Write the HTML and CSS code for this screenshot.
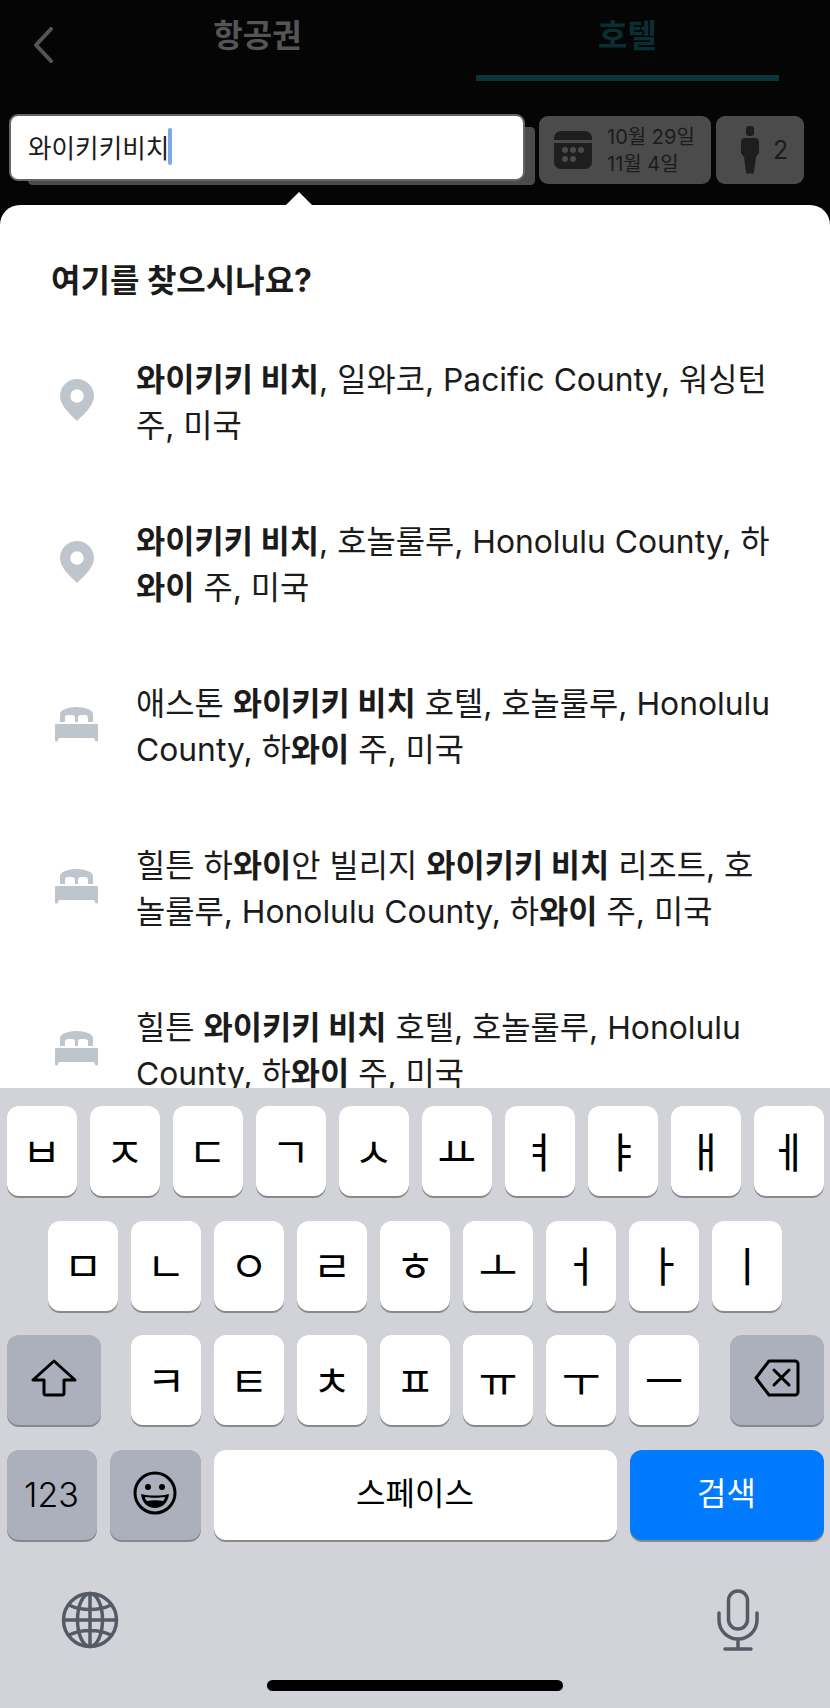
FILE: index.html
```html
<!DOCTYPE html>
<html lang="ko">

<head>
  <meta charset="UTF-8" />
  <meta name="viewport" content="width=device-width, initial-scale=1.0" />
  <title>호텔 검색</title>
  <link rel="stylesheet" href="styles.css">
</head>

<body>
  <div class="screen">
    <!-- Tabs -->
    <div class="tabs">
      <svg class="back" width="20" height="36" viewBox="0 0 20 36"><path d="M18 2 3 18l15 16" fill="none" stroke="#555" stroke-width="4" stroke-linecap="round" stroke-linejoin="round"/></svg>
      <div class="tab">항공권</div>
      <div class="tab active">호텔</div>
    </div>

    <!-- Search bar -->
    <div class="search-row">
      <div class="search-input"><span>와이키키비치</span><i class="caret"></i></div>
      <div class="chip dates">
        <svg width="38" height="38" viewBox="0 0 38 38"><path fill="#1e1e1e" fill-rule="evenodd" d="M7 0h24a7 7 0 0 1 7 7v2H0V7a7 7 0 0 1 7-7ZM0 12h38v19a7 7 0 0 1-7 7H7a7 7 0 0 1-7-7V12Zm11 4a3 3 0 1 0 0 6 3 3 0 0 0 0-6Zm8 0a3 3 0 1 0 0 6 3 3 0 0 0 0-6Zm8 0a3 3 0 1 0 0 6 3 3 0 0 0 0-6Zm-16 9a3 3 0 1 0 0 6 3 3 0 0 0 0-6Zm8 0a3 3 0 1 0 0 6 3 3 0 0 0 0-6Z"/></svg>
        <div class="date-text">10월 29일<br>11월 4일</div>
      </div>
      <div class="chip guests">
        <svg width="18" height="48" viewBox="0 0 18 48"><rect x="5" y="0" width="8" height="10" rx="3" fill="#1e1e1e"/><path fill="#1e1e1e" d="M4 12h10a4 4 0 0 1 4 4v11l-3 4-2 15a2 2 0 0 1-4 0 2 2 0 0 1-0 0H9a2 2 0 0 1-4 0L3 31l-3-4V16a4 4 0 0 1 4-4Z"/></svg>
        <span>2</span>
      </div>
    </div>
    <div class="pointer"></div>

    <!-- Suggestions -->
    <div class="panel">
      <h2>여기를 찾으시나요?</h2>

      <div class="result">
        <svg class="pin" width="34" height="42" viewBox="0 0 34 42"><path fill="#bfc5cc" fill-rule="evenodd" d="M17 0C7.6 0 0 7.6 0 17c0 10 11 19 17 25 6-6 17-15 17-25C34 7.600 26.400 0 17 0Zm0 10.300a6.700 6.700 0 1 1 0 13.400 6.700 6.700 0 0 1 0-13.400Z"/></svg>
        <p><b>와이키키 비치</b>, 일와코, Pacific County, 워싱턴<br>주, 미국</p>
      </div>
      <div class="result">
        <svg class="pin" width="34" height="42" viewBox="0 0 34 42"><path fill="#bfc5cc" fill-rule="evenodd" d="M17 0C7.6 0 0 7.6 0 17c0 10 11 19 17 25 6-6 17-15 17-25C34 7.600 26.400 0 17 0Zm0 10.300a6.700 6.700 0 1 1 0 13.400 6.700 6.700 0 0 1 0-13.400Z"/></svg>
        <p><b>와이키키 비치</b>, 호놀룰루, Honolulu County, 하<br><b>와이</b> 주, 미국</p>
      </div>
      <div class="result">
        <svg class="bed" width="43" height="35" viewBox="0 0 43 35"><path fill="#bfc5cc" d="M5 7c0-4 8-7 16.500-7S38 3 38 7v8h-5V11a3 3 0 0 0-3-3h-4a3 3 0 0 0-3 3v4h-3v-4a3 3 0 0 0-3-3h-4a3 3 0 0 0-3 3v4H5V7ZM1 17h41a1 1 0 0 1 1 1v15a1.500 1.500 0 0 1-3 0l-1-2H4l-1 2a1.500 1.500 0 0 1-3 0V18a1 1 0 0 1 1-1Z"/></svg>
        <p>애스톤 <b>와이키키 비치</b> 호텔, 호놀룰루, Honolulu<br>County, 하<b>와이</b> 주, 미국</p>
      </div>
      <div class="result">
        <svg class="bed" width="43" height="35" viewBox="0 0 43 35"><path fill="#bfc5cc" d="M5 7c0-4 8-7 16.500-7S38 3 38 7v8h-5V11a3 3 0 0 0-3-3h-4a3 3 0 0 0-3 3v4h-3v-4a3 3 0 0 0-3-3h-4a3 3 0 0 0-3 3v4H5V7ZM1 17h41a1 1 0 0 1 1 1v15a1.500 1.500 0 0 1-3 0l-1-2H4l-1 2a1.500 1.500 0 0 1-3 0V18a1 1 0 0 1 1-1Z"/></svg>
        <p>힐튼 하<b>와이</b>안 빌리지 <b>와이키키 비치</b> 리조트, 호<br>놀룰루, Honolulu County, 하<b>와이</b> 주, 미국</p>
      </div>
      <div class="result">
        <svg class="bed" width="43" height="35" viewBox="0 0 43 35"><path fill="#bfc5cc" d="M5 7c0-4 8-7 16.500-7S38 3 38 7v8h-5V11a3 3 0 0 0-3-3h-4a3 3 0 0 0-3 3v4h-3v-4a3 3 0 0 0-3-3h-4a3 3 0 0 0-3 3v4H5V7ZM1 17h41a1 1 0 0 1 1 1v15a1.500 1.500 0 0 1-3 0l-1-2H4l-1 2a1.500 1.500 0 0 1-3 0V18a1 1 0 0 1 1-1Z"/></svg>
        <p>힐튼 <b>와이키키 비치</b> 호텔, 호놀룰루, Honolulu<br>County, 하<b>와이</b> 주, 미국</p>
      </div>
    </div>

    <!-- Keyboard -->
    <div class="keyboard">
      <div class="row">
        <div class="key">ㅂ</div><div class="key">ㅈ</div><div class="key">ㄷ</div><div class="key">ㄱ</div><div class="key">ㅅ</div>
        <div class="key">ㅛ</div><div class="key">ㅕ</div><div class="key">ㅑ</div><div class="key">ㅐ</div><div class="key">ㅔ</div>
      </div>
      <div class="row center">
        <div class="key">ㅁ</div><div class="key">ㄴ</div><div class="key">ㅇ</div><div class="key">ㄹ</div><div class="key">ㅎ</div>
        <div class="key">ㅗ</div><div class="key">ㅓ</div><div class="key">ㅏ</div><div class="key">ㅣ</div>
      </div>
      <div class="row">
        <div class="key mod wide">
          <svg width="46" height="38" viewBox="0 0 46 38"><path d="M23 2 2 21h11v13a2 2 0 0 0 2 2h16a2 2 0 0 0 2-2V21h11L23 2Z" fill="none" stroke="#000" stroke-width="3" stroke-linejoin="round"/></svg>
        </div>
        <div class="letters">
          <div class="key">ㅋ</div><div class="key">ㅌ</div><div class="key">ㅊ</div><div class="key">ㅍ</div><div class="key">ㅠ</div><div class="key">ㅜ</div><div class="key">ㅡ</div>
        </div>
        <div class="key mod wide">
          <svg width="46" height="38" viewBox="0 0 46 38"><path d="M15 2h26a3 3 0 0 1 3 3v28a3 3 0 0 1-3 3H15L2 19 15 2Z" fill="none" stroke="#000" stroke-width="3" stroke-linejoin="round"/><path d="m20 11 15 15m0-15L20 26" fill="none" stroke="#000" stroke-width="3" stroke-linecap="round"/></svg>
        </div>
      </div>
      <div class="row">
        <div class="key mod num">123</div>
        <div class="key mod emoji">
          <svg width="44" height="44" viewBox="0 0 44 44"><circle cx="22" cy="22" r="20" fill="none" stroke="#000" stroke-width="3"/><circle cx="15" cy="16" r="3" fill="#000"/><circle cx="29" cy="16" r="3" fill="#000"/><path d="M8 23c8 2 20 2 28 0-1 9-7 14-14 14S9 32 8 23Z" fill="#000"/><path d="M12 26c6 1 14 1 20 0-.5 2-1 3-2 4-5-1-11-1-16 0-1-1-2-2-2-4Z" fill="#acb0bc"/></svg>
        </div>
        <div class="key space">스페이스</div>
        <div class="key go">검색</div>
      </div>
      <div class="kb-tools">
        <svg width="58" height="58" viewBox="0 0 58 58" fill="none" stroke="#555b66" stroke-width="3.500"><circle cx="29" cy="29" r="26.500"/><ellipse cx="29" cy="29" rx="12.500" ry="26.500"/><path d="M29 3v52M3 29h52M8 14c12 6 30 6 42 0M8 44c12-6 30-6 42 0"/></svg>
        <svg width="42" height="62" viewBox="0 0 42 62" fill="none" stroke="#555b66" stroke-width="3.500" stroke-linecap="round"><rect x="11.500" y="2" width="19" height="38" rx="9.500"/><path d="M2 24v7a19 19 0 0 0 38 0v-7M21 50v10M8 60h26"/></svg>
      </div>
      <div class="home-bar"></div>
    </div>
  </div>
</body>

</html>
```

FILE: styles.css
```css
body {
  margin: 0;
  font-family: Inter, "Noto Sans CJK KR", sans-serif;
  background-color: #050505;
  color: #1b1b1b;
}

.screen {
  width: 830px;
  height: 1708px;
  display: flex;
  flex-direction: column;
  overflow: hidden;
}

/* Tabs */
.tabs {
  display: flex;
  height: 81px;
  padding-left: 33px;
  gap: 67px;
}

.back {
  margin-top: 27px;
  margin-right: -14px;
}

.tab {
  width: 303px;
  height: 75px;
  padding-top: 14px;
  box-sizing: border-box;
  text-align: center;
  font-size: 32px;
  line-height: 44px;
  font-weight: 700;
  color: #555;
}

.tab.active {
  height: 81px;
  color: #0a2f32;
  border-bottom: 6px solid #0a3538;
}

/* Search bar */
.search-row {
  display: flex;
  align-items: flex-start;
  margin-top: 33px;
  padding-left: 9px;
}

.search-input {
  display: flex;
  align-items: center;
  width: 516px;
  height: 67px;
  box-sizing: border-box;
  padding: 0 0 3px 17px;
  background: #fff;
  border: 2px solid #666;
  border-radius: 9px;
  box-shadow: 14.500px 8.500px 0 -4.500px #4b4b4b;
  font-size: 25.600px;
}

.caret {
  width: 4px;
  height: 37px;
  margin-left: -1px;
  border-radius: 2px;
  background: #7ba9e6;
}

.chip {
  display: flex;
  align-items: center;
  height: 68px;
  margin-top: 2px;
  box-sizing: border-box;
  background: #4b4b4b;
  border-radius: 9px;
}

.dates {
  width: 172px;
  margin-left: 14px;
  padding-left: 15px;
  gap: 15px;
}

.date-text {
  padding-top: 2px;
  font-size: 20px;
  line-height: 27px;
}

.guests {
  width: 88px;
  margin-left: 5px;
  padding-left: 25px;
  gap: 14px;
  font-size: 25px;
}

.pointer {
  width: 0;
  margin: 8px 0 0 286px;
  border-left: 13px solid transparent;
  border-right: 13px solid transparent;
  border-bottom: 13px solid #fff;
}

/* Suggestions */
.panel {
  flex: 1;
  min-height: 0;
  overflow: hidden;
  background: #fff;
  border-radius: 20px 20px 0 0;
  padding: 56px 0 0 51px;
}

.panel h2 {
  margin: 0 0 50px;
  font-size: 32px;
  line-height: 40px;
  font-weight: 700;
}

.result {
  display: flex;
  align-items: center;
  margin-bottom: 64px;
}

.result svg {
  flex: none;
}

.result .pin {
  margin: 0 42px 0 9px;
}

.result .bed {
  margin: 0 38px 0 4px;
}

.result p {
  margin: 0;
  padding-top: 6px;
  font-size: 31.800px;
  line-height: 46px;
  white-space: nowrap;
}

.result b {
  font-weight: 700;
}

/* Keyboard */
.keyboard {
  flex: none;
  height: 620px;
  box-sizing: border-box;
  padding-top: 18px;
  background: #d1d3d9;
  color: #000;
}

.row {
  display: flex;
  justify-content: space-between;
  padding: 0 6.5px;
  margin-bottom: 24.500px;
}

.row.center {
  justify-content: center;
  gap: 13px;
}

.letters {
  display: flex;
  gap: 13px;
}

.key {
  display: flex;
  align-items: center;
  justify-content: center;
  width: 70px;
  height: 90px;
  padding-bottom: 4px;
  box-sizing: border-box;
  background: #fff;
  border-radius: 12px;
  box-shadow: 0 2px 0 #88898d;
  font-size: 42px;
}

.key.mod {
  background: #acb0bc;
}

.key.wide {
  width: 94px;
}

.key.num {
  width: 90px;
  padding-bottom: 0;
  font-size: 34px;
  font-weight: 300;
}

.key.emoji {
  width: 91px;
}

.key.space {
  width: 403px;
  padding-bottom: 8px;
  font-size: 32px;
}

.key.go {
  width: 194px;
  padding-bottom: 8px;
  font-size: 32px;
  color: #fff;
  background: #007aff;
}

.kb-tools {
  display: flex;
  align-items: center;
  justify-content: space-between;
  padding: 0 71px 0 61px;
  margin-top: 49px;
}

.home-bar {
  width: 296px;
  height: 11px;
  margin: 29px auto 0;
  border-radius: 6px;
  background: #000;
}
```
